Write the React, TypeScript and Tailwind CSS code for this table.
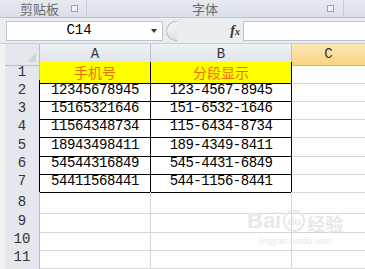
import React from "react";

const data = [
  { n: "1", a: "手机号", b: "分段显示", h: "h-[18px]" },
  { n: "2", a: "12345678945", b: "123-4567-8945", h: "h-[18px]" },
  { n: "3", a: "15165321646", b: "151-6532-1646", h: "h-[18px]" },
  { n: "4", a: "11564348734", b: "115-6434-8734", h: "h-[19px]" },
  { n: "5", a: "18943498411", b: "189-4349-8411", h: "h-[18px]" },
  { n: "6", a: "54544316849", b: "545-4431-6849", h: "h-[18px]" },
  { n: "7", a: "54411568441", b: "544-1156-8441", h: "h-[21px]" },
];

const emptyRows = [
  { n: "8", h: "h-[19px]" },
  { n: "9", h: "h-[18px]" },
  { n: "10", h: "h-[18px]" },
  { n: "11", h: "h-[19px]" },
  { n: "", h: "h-[18px]" },
];

const mono = { fontFamily: '"Liberation Mono", "DejaVu Sans Mono", monospace' };
const cjk = { fontFamily: '"Noto Sans CJK SC", sans-serif' };

const App = () => {
  return (
    <div className="relative w-[365px] h-[269px] overflow-hidden bg-white" style={mono}>
      {/* ribbon group labels */}
      <div className="flex h-[18px] bg-gradient-to-b from-[#e6eaef] to-[#dbe0e7] border-b border-[#b9c1cb] text-[13px] text-[#6a6a6a]">
        <div className="flex w-[87px] items-center border-r border-[#c3cad3] pl-[20px]">
          <span style={cjk} className="leading-none">
            剪贴板
          </span>
          <span className="ml-auto mr-[8px] w-[7px] h-[7px] border border-[#9aa3ad] bg-[#eef1f4]" />
        </div>
        <div className="relative flex w-[257px] items-center justify-center border-r border-[#c3cad3]">
          <span style={cjk} className="leading-none -ml-[20px]">
            字体
          </span>
          <span className="absolute right-[9px] w-[7px] h-[7px] border border-[#9aa3ad] bg-[#eef1f4]" />
        </div>
      </div>

      {/* formula bar */}
      <div className="flex h-[26px] items-center bg-[#e9ecf0] pl-[6px] border-b border-[#c8ced6]">
        <div className="flex h-[20px] w-[157px] items-center border border-[#bcc4ce] bg-white">
          <span className="flex-1 text-center text-[14px] text-black">C14</span>
          <span className="mr-[5px] w-0 h-0 border-l-[3px] border-r-[3px] border-t-[4px] border-l-transparent border-r-transparent border-t-[#333]" />
        </div>
        <div className="flex h-[20px] w-[80px] items-center">
          <span className="ml-[3px] w-[11px] h-[20px] rounded-l-full border border-r-0 border-[#b5bcc6] bg-gradient-to-b from-[#f4f6f8] to-[#dfe3e8]" />
          <span
            className="ml-auto mr-[3px] text-[14px] italic font-bold text-[#333]"
            style={{ fontFamily: '"Liberation Serif", serif' }}
          >
            f<span className="text-[10px]">x</span>
          </span>
        </div>
        <div className="h-[20px] flex-1 border border-[#bcc4ce] border-r-0 bg-white" />
      </div>

      {/* column headers */}
      <div className="grid grid-cols-[5px_35px_111px_141px_1fr] h-[18px] text-[14px] text-[#333]">
        <div className="bg-[#f2f2f2]" />
        <div className="relative bg-[#e4e7eb] border-r border-b border-[#b8bfc8]">
          <span className="absolute right-[3px] bottom-[3px] w-0 h-0 border-l-[9px] border-b-[9px] border-l-transparent border-b-[#cfd4da]" />
        </div>
        <div className="flex items-center justify-center bg-gradient-to-b from-[#eef0f3] to-[#dfe3e8] border-r border-b border-[#b8bfc8]">
          A
        </div>
        <div className="flex items-center justify-center bg-gradient-to-b from-[#eef0f3] to-[#dfe3e8] border-r border-b border-[#b8bfc8]">
          B
        </div>
        <div className="flex items-center justify-center bg-gradient-to-b from-[#fbe8b8] to-[#f7d47e] border-b border-[#e2b55a]">
          C
        </div>
      </div>

      {/* data rows */}
      {data.map((r, i) => (
        <div key={r.n} className={`grid grid-cols-[5px_35px_111px_141px_1fr] text-[14px] ${r.h}`}>
          <div className="bg-[#f2f2f2]" />
          <div className="flex items-center justify-center bg-[#e4e7eb] border-r border-b border-[#b8bfc8] text-[#333]">
            {r.n}
          </div>
          {i === 0 ? (
            <>
              <div
                className="flex items-center justify-center bg-[#ffff00] border-r border-b border-black text-[14px] text-[#f26a00]"
                style={cjk}
              >
                {r.a}
              </div>
              <div
                className="flex items-center justify-center bg-[#ffff00] border-r border-b border-black text-[14px] text-[#f26a00]"
                style={cjk}
              >
                {r.b}
              </div>
            </>
          ) : (
            <>
              <div className="flex items-center justify-center border-l border-r border-b border-black -ml-px text-black tracking-[-0.4px]">
                {r.a}
              </div>
              <div className="flex items-center justify-center border-r border-b border-black text-black tracking-[-0.5px]">
                {r.b}
              </div>
            </>
          )}
          <div className="border-b border-[#d6d6d6]" />
        </div>
      ))}

      {emptyRows.map((r, i) => (
        <div key={i} className={`grid grid-cols-[5px_35px_111px_141px_1fr] text-[14px] ${r.h}`}>
          <div className="bg-[#f2f2f2]" />
          <div className="flex items-center justify-center bg-[#e4e7eb] border-r border-b border-[#b8bfc8] text-[#333]">
            {r.n}
          </div>
          <div className="border-r border-b border-[#d6d6d6]" />
          <div className="border-r border-b border-[#d6d6d6]" />
          <div className="border-b border-[#d6d6d6]" />
        </div>
      ))}

      {/* watermark */}
      <div className="absolute left-[247px] top-[210px] flex flex-col items-center text-[#e8e8e8] pointer-events-none">
        <div className="flex items-end leading-none" style={{ fontFamily: '"Liberation Sans", sans-serif' }}>
          <span className="text-[22px] font-bold">Bai</span>
          <span className="mx-[2px] flex h-[22px] w-[22px] items-center justify-center rounded-full border-2 border-[#e8e8e8] text-[11px] font-bold">
            du
          </span>
          <span className="text-[18px] font-bold" style={cjk}>
            经验
          </span>
        </div>
        <span className="mt-[3px] text-[9px]" style={{ fontFamily: '"Liberation Sans", sans-serif' }}>
          jingyan.baidu.com
        </span>
      </div>
    </div>
  );
};

export default App;
